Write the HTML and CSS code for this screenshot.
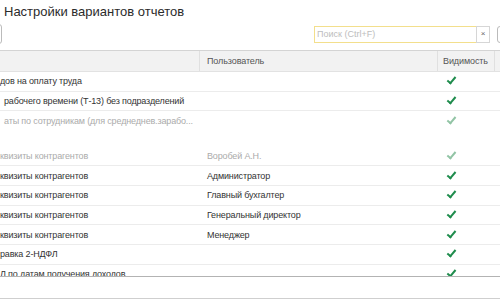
FILE: index.html
```html
<!DOCTYPE html>
<html lang="ru">
<head>
  <meta charset="UTF-8" />
  <title>Настройки вариантов отчетов</title>
  <link rel="stylesheet" href="styles.css">
</head>
<body>
  <div class="form">
    <h2 class="title">Настройки вариантов отчетов</h2>

    <div class="toolbar">
      <button class="tool-button"></button>
      <div class="spacer"></div>
      <div class="search">
        <input type="text" class="search-field" placeholder="Поиск (Ctrl+F)" />
        <button class="search-clear">×</button>
      </div>
      <button class="tool-button next-button"></button>
    </div>

    <div class="table">
      <div class="table-head">
        <div class="cell col-name"></div>
        <div class="cell col-user">Пользователь</div>
        <div class="cell col-visible">Видимость</div>
        <div class="cell col-rest"></div>
      </div>

      <div class="table-body">
        <div class="row">
          <div class="cell col-name">дов на оплату труда</div>
          <div class="cell col-user"></div>
          <div class="cell col-visible"><span class="check"></span></div>
        </div>
        <div class="row">
          <div class="cell col-name shift">рабочего времени (Т-13) без подразделений</div>
          <div class="cell col-user"></div>
          <div class="cell col-visible"><span class="check"></span></div>
        </div>
        <div class="row row-tall muted">
          <div class="cell col-name shift">аты по сотрудникам (для среднеднев.зарабо...</div>
          <div class="cell col-user"></div>
          <div class="cell col-visible"><span class="check"></span></div>
        </div>
        <div class="row muted">
          <div class="cell col-name">квизиты контрагентов</div>
          <div class="cell col-user">Воробей А.Н.</div>
          <div class="cell col-visible"><span class="check"></span></div>
        </div>
        <div class="row">
          <div class="cell col-name">квизиты контрагентов</div>
          <div class="cell col-user">Администратор</div>
          <div class="cell col-visible"><span class="check"></span></div>
        </div>
        <div class="row">
          <div class="cell col-name">квизиты контрагентов</div>
          <div class="cell col-user">Главный бухгалтер</div>
          <div class="cell col-visible"><span class="check"></span></div>
        </div>
        <div class="row">
          <div class="cell col-name">квизиты контрагентов</div>
          <div class="cell col-user">Генеральный директор</div>
          <div class="cell col-visible"><span class="check"></span></div>
        </div>
        <div class="row">
          <div class="cell col-name">квизиты контрагентов</div>
          <div class="cell col-user">Менеджер</div>
          <div class="cell col-visible"><span class="check"></span></div>
        </div>
        <div class="row">
          <div class="cell col-name">равка 2-НДФЛ</div>
          <div class="cell col-user"></div>
          <div class="cell col-visible"><span class="check"></span></div>
        </div>
        <div class="row">
          <div class="cell col-name">Л по датам получения доходов</div>
          <div class="cell col-user"></div>
          <div class="cell col-visible"><span class="check"></span></div>
        </div>
      </div>
    </div>

    <div class="footer"></div>
  </div>
</body>
</html>
```

FILE: styles.css
```css
body {
  margin: 0;
  width: 500px;
  height: 300px;
  overflow: hidden;
  background: #fff;
  font-family: "Liberation Sans", Arial, sans-serif;
  color: #333;
}
.form {
  width: 500px;
}
.title {
  margin: 0;
  height: 24px;
  padding-left: 4px;
  font-size: 13px;
  font-weight: 400;
  line-height: 24px;
  color: #2b2b2b;
}
.toolbar {
  display: flex;
  align-items: center;
  height: 20px;
  margin-bottom: 6px;
}
.tool-button {
  width: 22px;
  height: 20px;
  margin-left: -20px;
  padding: 0;
  border: 1px solid #bbb;
  border-radius: 3px;
  background: #fff;
}
.spacer {
  flex: 1;
}
.search {
  display: flex;
  height: 17px;
}
.search-field {
  width: 163px;
  height: 17px;
  box-sizing: border-box;
  padding: 0 0 0 2px;
  border: 1px solid #f3df8c;
  font-family: inherit;
  font-size: 9px;
  color: #333;
  outline: none;
}
.search-field::placeholder {
  color: #bdbdbd;
}
.search-clear {
  width: 14px;
  height: 17px;
  box-sizing: border-box;
  margin-left: -1px;
  padding: 0;
  border: 1px solid #d6d6d6;
  background: #fff;
  font-family: inherit;
  font-size: 8px;
  line-height: 14px;
  color: #666;
}
.next-button {
  height: 17px;
  margin-left: 7px;
  margin-right: -19px;
}
.table {
  border-top: 1px solid #d4d4d4;
  border-bottom: 1px solid #b3b3b3;
}
.table-head {
  display: flex;
  height: 20px;
  background: #f2f2f2;
  border-bottom: 1px solid #e2e2e2;
  font-size: 9px;
  letter-spacing: -0.1px;
  color: #555;
}
.table-head .cell {
  border-right: 1px solid #e0e0e0;
}
.table-head .col-user {
  padding-left: 7px;
}
.table-head .col-visible {
  justify-content: flex-start;
  padding-left: 5px;
}
.table-body {
  height: 204px;
  overflow: hidden;
}
.row {
  display: flex;
  height: 19.7px;
  border-bottom: 1px solid #ececec;
  font-size: 9px;
  letter-spacing: -0.15px;
  box-sizing: border-box;
}
.row-tall {
  height: 35.3px;
  border-bottom: none;
  align-items: flex-start;
}
.row-tall .cell {
  height: 19.7px;
}
.cell {
  display: flex;
  align-items: center;
  box-sizing: border-box;
  white-space: nowrap;
  overflow: hidden;
}
.col-name {
  width: 200px;
}
.col-user {
  width: 238px;
  padding-left: 7px;
}
.col-visible {
  width: 57px;
  padding-left: 9px;
}
.col-rest {
  flex: 1;
}
.table-head .col-rest {
  border-right: none;
}
.shift {
  padding-left: 4px;
}
.muted {
  color: #ababab;
}
.check {
  width: 7px;
  height: 3px;
  margin-top: -3px;
  border-left: 2px solid #1f8c4d;
  border-bottom: 2px solid #1f8c4d;
  transform: rotate(-50deg);
}
.muted .check {
  border-color: #92c4a5;
}
.footer {
  height: 21px;
  border-bottom: 1px solid #cfcfcf;
}
```
